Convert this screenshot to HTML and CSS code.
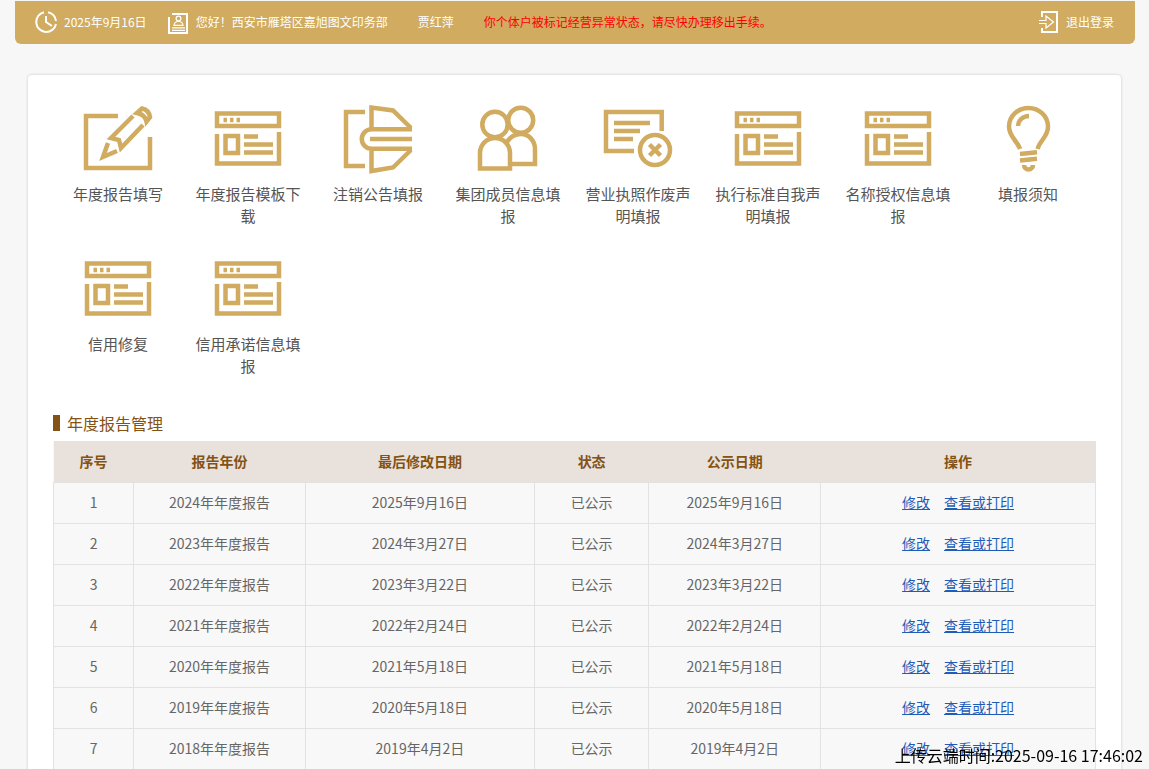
FILE: index.html
```html
<!DOCTYPE html>
<html lang="zh-CN">

<head>
  <meta charset="UTF-8">
  <meta name="viewport" content="width=device-width, initial-scale=1.0">
  <title>年度报告管理</title>
  <link rel="stylesheet" href="styles.css">
</head>

<body>
  <!-- 公用图标 -->
  <svg class="sprite" aria-hidden="true">
    <symbol id="icon-window" viewBox="0 0 70 70">
      <path d="M4 9.5H66V22H4ZM4 30V59.5H66V28M12.5 32H25V49H12.5ZM31 32.5H45M31 40.5H60M31 48.5H60" />
      <path d="M10.5 16H14M17 16H20.5M23.5 16H27" />
    </symbol>
  </svg>

  <!-- 顶部栏 -->
  <header class="top-bar">
    <svg class="top-icon" viewBox="0 0 24 24">
      <path d="M14 2.2A10 10 0 0 1 22 11M22 14A10 10 0 1 1 10 2.2" />
      <path d="M12 6V12L18 16" />
    </svg>
    <span class="date">2025年9月16日</span>
    <svg class="top-icon" viewBox="0 0 24 24">
      <path d="M6 4H21V23H3V7" />
      <g class="thin">
        <circle cx="12.5" cy="8.5" r="2.4" />
        <path d="M8 15.3Q8.5 11.5 12.5 11.5Q16.5 11.5 17 15.3ZM6 17.8H19M6 20.3H19" />
      </g>
    </svg>
    <span class="welcome">您好！西安市雁塔区嘉旭图文印务部</span>
    <span class="user">贾红萍</span>
    <span class="warning">你个体户被标记经营异常状态，请尽快办理移出手续。</span>
    <a class="logout" href="#">
      <svg class="top-icon" viewBox="0 0 24 24">
        <path d="M6 7V2H21V22H6V18" />
        <path class="thin" d="M3 10.5H10V6L17.5 12L10 18V13.5H3" />
      </svg>
      退出登录
    </a>
  </header>

  <main class="content">
    <!-- 功能入口 -->
    <nav class="menu">
      <a href="#">
        <svg viewBox="0 0 70 70">
          <path d="M35 12H3V64H67V33M50 12L28 34L36 36L38 44L60 21M25 39L20 53L34 47" />
          <path d="M54 9L59 4.5Q66 6 67 13L63.5 17.5Q62 10.5 54 9Z" />
        </svg>
        <span>年度报告填写</span>
      </a>
      <a href="#"><svg><use href="#icon-window" /></svg><span>年度报告模板下载</span></a>
      <a href="#">
        <svg viewBox="0 0 70 70">
          <path d="M22 8H3V62H22M28.5 25V3.5L50 6.5L68 24M69 25.3H28.5A9.7 9.7 0 0 0 28.5 44.7H69M27 35H69M28.5 45V67L50 63.5L68 46" />
        </svg>
        <span>注销公告填报</span>
      </a>
      <a href="#">
        <svg viewBox="0 0 70 70">
          <circle cx="22" cy="20.5" r="12.7" />
          <circle cx="47.7" cy="16.3" r="12.5" />
          <path d="M7 64.5V49A15 15 0 0 1 37 49V64.5ZM34 38Q39 30 48 30A14 15 0 0 1 62 45V60H38" />
        </svg>
        <span>集团成员信息填报</span>
      </a>
      <a href="#">
        <svg viewBox="0 0 70 70">
          <path d="M58.7 27V8H3V47H31M11 19H47M11 27H37M11 35H30M46.5 40.5L57.5 51.5M57.5 40.5L46.5 51.5" />
          <circle cx="52" cy="46" r="15" />
        </svg>
        <span>营业执照作废声明填报</span>
      </a>
      <a href="#"><svg><use href="#icon-window" /></svg><span>执行标准自我声明填报</span></a>
      <a href="#"><svg><use href="#icon-window" /></svg><span>名称授权信息填报</span></a>
      <a href="#">
        <svg viewBox="0 0 70 70">
          <path d="M27 45C24 36 16 33 16 22.5A19.5 18.5 0 0 1 55 22.5C55 33 47 36 44.5 45M25 22A11 10 0 0 1 36 12M27 50L44 48.3M27 56.5L44 54.8M31 61A4.5 4.5 0 0 0 40 61" />
        </svg>
        <span>填报须知</span>
      </a>
      <a href="#"><svg><use href="#icon-window" /></svg><span>信用修复</span></a>
      <a href="#"><svg><use href="#icon-window" /></svg><span>信用承诺信息填报</span></a>
    </nav>

    <!-- 年度报告列表 -->
    <h2>年度报告管理</h2>
    <table>
      <thead>
        <tr>
          <th class="col-no">序号</th>
          <th class="col-year">报告年份</th>
          <th class="col-modified">最后修改日期</th>
          <th class="col-status">状态</th>
          <th class="col-public">公示日期</th>
          <th class="col-action">操作</th>
        </tr>
      </thead>
      <tbody>
        <tr>
          <td>1</td>
          <td>2024年年度报告</td>
          <td>2025年9月16日</td>
          <td>已公示</td>
          <td>2025年9月16日</td>
          <td><a href="#">修改</a><a href="#">查看或打印</a></td>
        </tr>
        <tr>
          <td>2</td>
          <td>2023年年度报告</td>
          <td>2024年3月27日</td>
          <td>已公示</td>
          <td>2024年3月27日</td>
          <td><a href="#">修改</a><a href="#">查看或打印</a></td>
        </tr>
        <tr>
          <td>3</td>
          <td>2022年年度报告</td>
          <td>2023年3月22日</td>
          <td>已公示</td>
          <td>2023年3月22日</td>
          <td><a href="#">修改</a><a href="#">查看或打印</a></td>
        </tr>
        <tr>
          <td>4</td>
          <td>2021年年度报告</td>
          <td>2022年2月24日</td>
          <td>已公示</td>
          <td>2022年2月24日</td>
          <td><a href="#">修改</a><a href="#">查看或打印</a></td>
        </tr>
        <tr>
          <td>5</td>
          <td>2020年年度报告</td>
          <td>2021年5月18日</td>
          <td>已公示</td>
          <td>2021年5月18日</td>
          <td><a href="#">修改</a><a href="#">查看或打印</a></td>
        </tr>
        <tr>
          <td>6</td>
          <td>2019年年度报告</td>
          <td>2020年5月18日</td>
          <td>已公示</td>
          <td>2020年5月18日</td>
          <td><a href="#">修改</a><a href="#">查看或打印</a></td>
        </tr>
        <tr>
          <td>7</td>
          <td>2018年年度报告</td>
          <td>2019年4月2日</td>
          <td>已公示</td>
          <td>2019年4月2日</td>
          <td><a href="#">修改</a><a href="#">查看或打印</a></td>
        </tr>
      </tbody>
    </table>
  </main>

  <!-- 上传时间水印 -->
  <div class="upload-time">上传云端时间:2025-09-16 17:46:02</div>
</body>

</html>
```

FILE: styles.css
```css
/* 全局样式 */
* {
  box-sizing: border-box;
}

body {
  margin: 0;
  padding: 1px 14px 0 15px;
  background: #f7f7f7;
  color: #666;
  font-family: "Noto Sans CJK SC", sans-serif;
  font-size: 14px;
}

svg {
  fill: none;
  stroke: #d0ab60;
  stroke-width: 4.5;
}

.sprite {
  display: none;
}

/* 顶部栏 */
.top-bar {
  display: flex;
  align-items: center;
  height: 43px;
  padding: 0 21px 2px 19px;
  border-radius: 0 0 6px 6px;
  background: #d0ab60;
  color: #fff;
  font-size: 12px;
}

.top-icon {
  width: 24px;
  height: 24px;
  margin-right: 6px;
  stroke: #fff;
  stroke-width: 2;
}

.thin {
  stroke-width: 1.2;
}

.date {
  margin-right: 19px;
}

.user {
  margin: 0 30px;
}

.warning {
  color: #f00;
}

.logout {
  display: flex;
  align-items: center;
  margin-left: auto;
  color: #fff;
  text-decoration: none;
}

/* 内容区域 */
.content {
  margin: 31px 14px 0 13px;
  padding: 29px 25px 25px;
  border-radius: 4px;
  background: #fff;
  box-shadow: 0 0 3px rgba(0, 0, 0, 0.2);
}

.menu {
  display: flex;
  flex-wrap: wrap;
}

.menu a {
  width: 130px;
  height: 150px;
  padding: 0 12px;
  color: #555;
  font-size: 15px;
  line-height: 22px;
  text-align: center;
  text-decoration: none;
}

.menu svg {
  display: block;
  width: 70px;
  height: 70px;
  margin: 0 auto 9px;
}

.menu span {
  display: block;
}

h2 {
  display: flex;
  align-items: center;
  margin: 8px 0 7px;
  color: #845213;
  font-size: 16px;
  font-weight: normal;
  line-height: 22px;
}

h2::before {
  content: "";
  width: 7px;
  height: 16px;
  margin-right: 7px;
  background: #845213;
}

/* 表格 */
table {
  width: 100%;
  table-layout: fixed;
  border-collapse: collapse;
  background: #f8f8f8;
  text-align: center;
}

th {
  height: 41px;
  padding: 0;
  background: #e9e2dc;
  color: #845213;
}

td {
  height: 41px;
  padding: 0 0 2px;
  border: 1px solid #e2e2e2;
}

td a {
  color: #1f5cb8;
}

td a + a {
  margin-left: 14px;
}

.col-no {
  width: 7%;
}

.col-year,
.col-public {
  width: 15%;
}

.col-modified {
  width: 20%;
}

.col-status {
  width: 10%;
}

.col-action {
  width: 24%;
}

/* 上传时间水印 */
.upload-time {
  position: fixed;
  right: 6px;
  bottom: 3px;
  color: #000;
  font-size: 16px;
  line-height: 22px;
}
```
